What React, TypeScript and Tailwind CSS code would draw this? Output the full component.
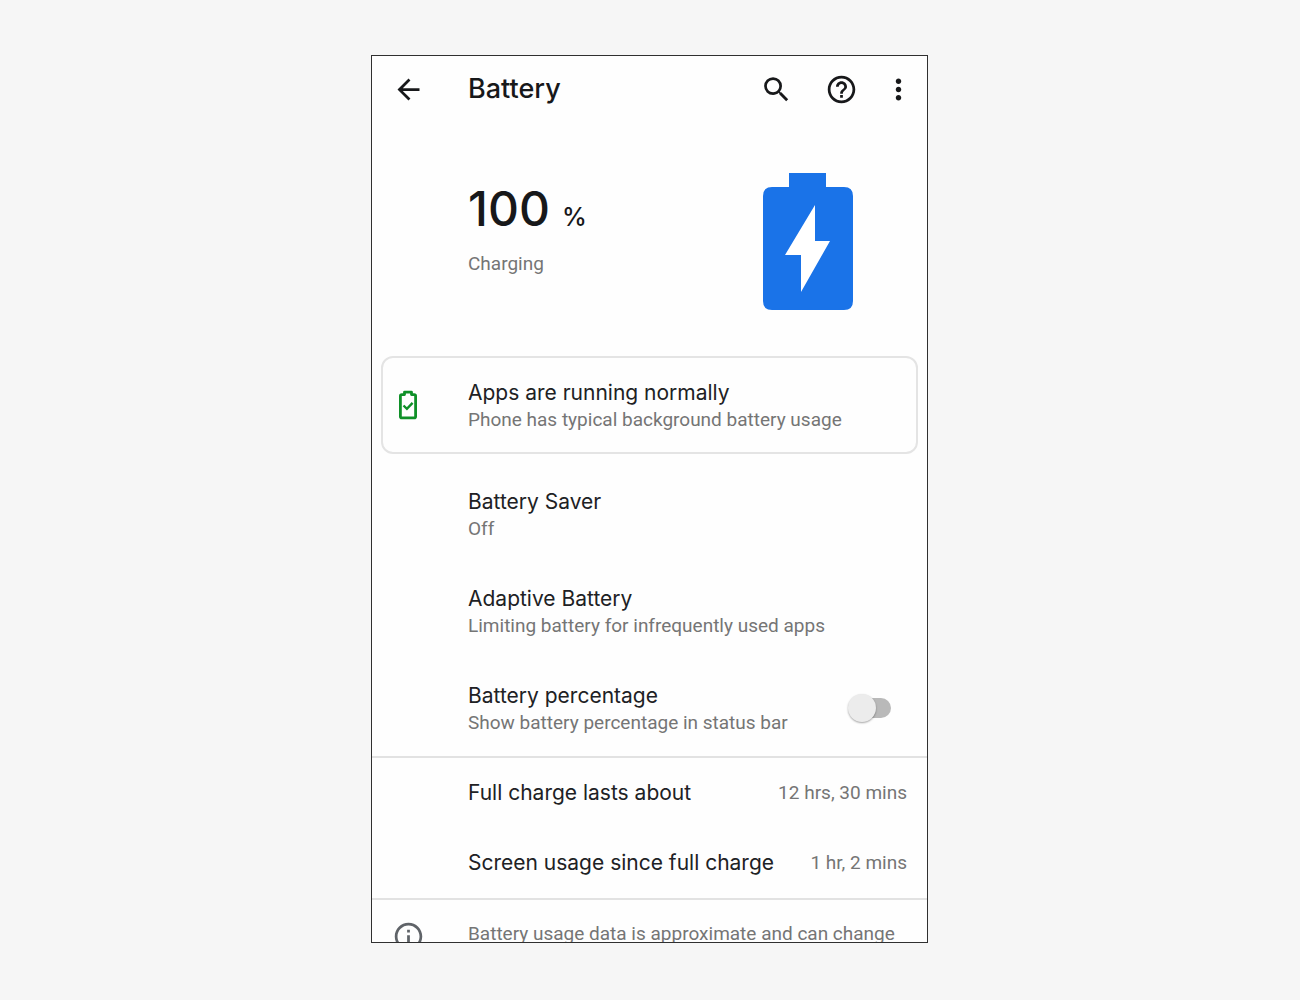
import { useState } from 'react';
import type { ReactNode } from 'react';
import { MdArrowBack, MdHelpOutline, MdInfoOutline, MdMoreVert, MdSearch } from 'react-icons/md';

// ─── Icons ────────────────────────────────────────────────────────────────────

function BatteryCharging() {
  return (
    <svg width="90" height="137" viewBox="0 0 90 137" aria-hidden="true">
      <path
        fill="#1a73e8"
        d="M26 0H63V14H81Q90 14 90 23V128Q90 137 81 137H9Q0 137 0 128V23Q0 14 9 14H26Z"
      />
      <path fill="#fff" d="M52 32V68H67L38 119V82H22Z" />
    </svg>
  );
}

function BatteryOk() {
  return (
    <svg width="20" height="30" viewBox="0 0 20 30" fill="none" stroke="#0f9028" aria-hidden="true">
      <path
        strokeWidth="2.8"
        strokeLinejoin="round"
        d="M6.5 4.6V2.2H13.5V4.6H16.2Q17.6 4.6 17.6 6V26.4Q17.6 27.8 16.2 27.8H3.8Q2.4 27.8 2.4 26.4V6Q2.4 4.6 3.8 4.6Z"
      />
      <path strokeWidth="2.4" d="M5.5 15.5L8.9 18.8L14.6 12.8" />
    </svg>
  );
}

// ─── List rows ────────────────────────────────────────────────────────────────

function RowText({ title, summary }: { title: string; summary: string }) {
  return (
    <span className="block pt-0.5">
      <span className="block text-[21px] leading-7 text-[#202124]">{title}</span>
      <span className="block font-[Roboto,sans-serif] text-[19px] leading-[26px] text-[#757575]">{summary}</span>
    </span>
  );
}

function SettingRow({ title, summary }: { title: string; summary: string }) {
  return (
    <button className="flex min-h-[97px] w-full items-center pl-24 text-left">
      <RowText title={title} summary={summary} />
    </button>
  );
}

function StatRow({ title, value }: { title: string; value: string }) {
  return (
    <div className="flex min-h-[70px] items-center justify-between pl-24 pr-5">
      <dt className="text-[21px] leading-7 text-[#202124]">{title}</dt>
      <dd className="font-[Roboto,sans-serif] text-[19px] leading-7 text-[#757575]">{value}</dd>
    </div>
  );
}

function IconButton({ label, children }: { label: string; children: ReactNode }) {
  return (
    <button aria-label={label} className="flex items-center justify-center text-[33px]">
      {children}
    </button>
  );
}

// ─── Battery settings screen ──────────────────────────────────────────────────

export default function App() {
  const [showPercentage, setShowPercentage] = useState(false);

  return (
    <div className="min-h-screen bg-[#f6f6f6] py-[55px] pr-px font-[Inter,sans-serif] text-[#17181a]">
      <main className="mx-auto w-full max-w-[557px] border border-[#303030] bg-[#fefefe]">
        <header className="flex h-[66px] items-center pr-3">
          <div className="flex w-24 pl-5">
            <IconButton label="Navigate up"><MdArrowBack /></IconButton>
          </div>
          <h1 className="flex-1 text-[27px] font-medium leading-9">Battery</h1>
          <div className="flex items-center gap-8">
            <IconButton label="Search"><MdSearch /></IconButton>
            <IconButton label="Help"><MdHelpOutline /></IconButton>
            <div className="-ml-2 flex">
              <IconButton label="More options"><MdMoreVert /></IconButton>
            </div>
          </div>
        </header>

        {/* Charge level */}
        <section className="flex items-start justify-between pb-[46px] pl-24 pr-[74px] pt-[51px]">
          <div>
            <p className="flex items-baseline gap-3 pt-2 leading-[56px]">
              <span className="text-[48px] font-medium">100</span>
              <span className="text-[25px] font-medium">%</span>
            </p>
            <p className="pt-1.5 font-[Roboto,sans-serif] text-[19px] leading-[26px] text-[#757575]">Charging</p>
          </div>
          <BatteryCharging />
        </section>

        {/* Battery tip */}
        <button className="mx-[9px] mb-[11px] flex min-h-[98px] w-[calc(100%-18px)] items-center rounded-xl border-2 border-[#e4e4e4] text-left">
          <span className="w-[85px] pl-[15px]">
            <BatteryOk />
          </span>
          <RowText title="Apps are running normally" summary="Phone has typical background battery usage" />
        </button>

        <SettingRow title="Battery Saver" summary="Off" />
        <SettingRow title="Adaptive Battery" summary="Limiting battery for infrequently used apps" />
        <label className="flex min-h-[97px] items-center justify-between pl-24 pr-9">
          <RowText title="Battery percentage" summary="Show battery percentage in status bar" />
          <input
            type="checkbox"
            role="switch"
            checked={showPercentage}
            onChange={(e) => setShowPercentage(e.target.checked)}
            className="flex h-5 w-[43px] appearance-none items-center rounded-full bg-[linear-gradient(to_right,transparent_10px,#b9b9b9_10px)] before:block before:size-7 before:rounded-full before:bg-[#ececec] before:shadow-[0_1px_2px_rgba(0,0,0,0.35)] checked:justify-end checked:bg-[#8ab4f8] checked:before:bg-[#1a73e8]"
          />
        </label>

        <dl className="border-y-2 border-[#e2e2e2]">
          <StatRow title="Full charge lasts about" value="12 hrs, 30 mins" />
          <StatRow title="Screen usage since full charge" value="1 hr, 2 mins" />
        </dl>

        {/* Footer note, cut off at the bottom of the viewport */}
        <footer className="flex h-[42px] items-start overflow-hidden pt-5 text-[#757575]">
          <div className="w-24 shrink-0 pl-5 text-[33px] text-[#5f6368]">
            <MdInfoOutline />
          </div>
          <p className="font-[Roboto,sans-serif] text-[19px] leading-7">
            Battery usage data is approximate and can change
          </p>
        </footer>
      </main>
    </div>
  );
}
